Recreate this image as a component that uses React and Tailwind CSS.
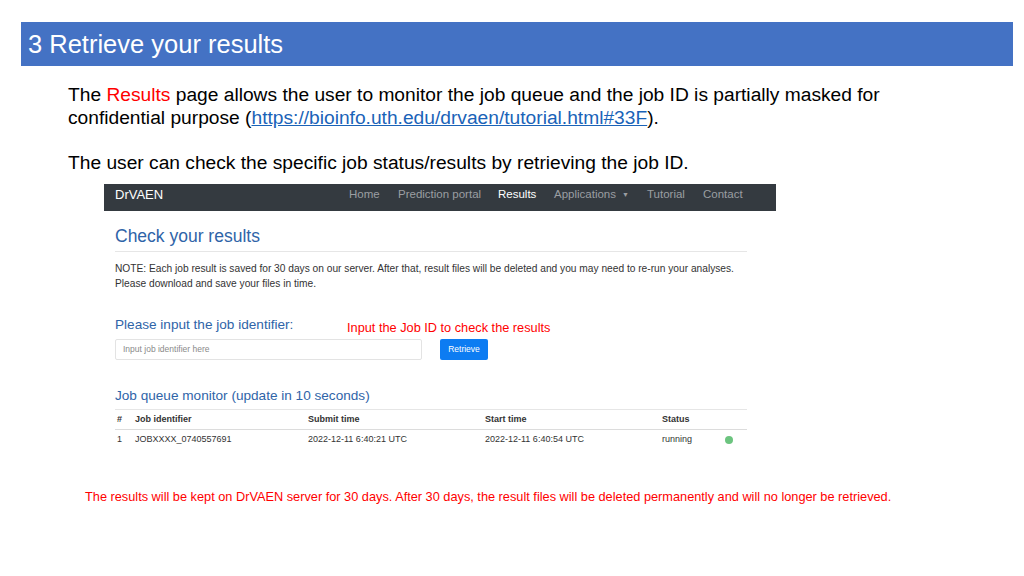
import React from "react";

const navItems = [
  { label: "Home", w: "w-[49px]" },
  { label: "Prediction portal", w: "w-[100px]" },
  { label: "Results", w: "w-[56px]", active: true },
  { label: "Applications", w: "w-[93px]", caret: true },
  { label: "Tutorial", w: "w-[56px]" },
  { label: "Contact", w: "w-[60px]" },
];

const Screenshot = () => {
  return (
    <div className="ml-[104px] mt-[10px] w-[672px] font-['Liberation_Sans',Arial,sans-serif]">
      {/* navbar */}
      <div className="h-[27px] bg-[#343a40] flex items-center pl-[11px] pb-[5px] text-[11.5px] whitespace-nowrap">
        <span className="w-[234px] text-white text-[13px]">DrVAEN</span>
        {navItems.map((item) => (
          <span
            key={item.label}
            className={`${item.w} ${item.active ? "text-white" : "text-[#9b9ea2]"} flex items-center`}
          >
            {item.label}
            {item.caret && <span className="ml-[6px] text-[7px]">▼</span>}
          </span>
        ))}
      </div>

      <div className="pl-[11px] w-[643px]">
        <h3 className="mt-[15px] text-[17.5px] leading-[20px] text-[#2f64a8]">Check your results</h3>
        <div className="mt-[5px] h-px bg-[#e6e6e6]" />
        <p className="mt-[9px] text-[10.2px] leading-[15px] text-[#333] whitespace-nowrap">
          NOTE: Each job result is saved for 30 days on our server. After that, result files will be deleted and you may need to re-run your analyses.
          <br />
          Please download and save your files in time.
        </p>

        <div className="mt-[26px] flex items-end whitespace-nowrap">
          <span className="w-[232px] text-[13.6px] leading-[16px] text-[#2f64a8]">Please input the job identifier:</span>
          <span className="text-[12.75px] leading-[14px] text-[#f00] mb-[-2px]">
            Input the Job ID to check the results
          </span>
        </div>
        <div className="mt-[6px] flex items-center">
          <div className="w-[307px] h-[21px] border border-[#e3e3e3] rounded-[2px] flex items-center pl-[7px] text-[8.5px] text-[#8a8a8a]">
            Input job identifier here
          </div>
          <div className="ml-[18px] w-[48px] h-[21px] bg-[#0d7cf2] rounded-[2px] flex items-center justify-center text-[8.5px] text-white">
            Retrieve
          </div>
        </div>

        <h4 className="mt-[27px] text-[13.6px] leading-[18px] text-[#2f64a8]">Job queue monitor (update in 10 seconds)</h4>
        <div className="mt-[4px] border-t border-[#e6e6e6] text-[9px] text-[#333]">
          <div className="grid grid-cols-[18px_173px_177px_177px_65px_22px] h-[20px] items-center font-bold border-b border-[#dcdcdc]">
            <span className="pl-[2px]">#</span>
            <span className="pl-[2px]">Job identifier</span>
            <span className="pl-[2px]">Submit time</span>
            <span className="pl-[2px]">Start time</span>
            <span className="pl-[2px]">Status</span>
            <span />
          </div>
          <div className="grid grid-cols-[18px_173px_177px_177px_65px_22px] h-[20px] items-center">
            <span className="pl-[2px]">1</span>
            <span className="pl-[2px]">JOBXXXX_0740557691</span>
            <span className="pl-[2px]">2022-12-11 6:40:21 UTC</span>
            <span className="pl-[2px]">2022-12-11 6:40:54 UTC</span>
            <span className="pl-[2px]">running</span>
            <span className="flex items-center">
              <span className="w-[8px] h-[8px] rounded-full bg-[#6cc47f]" />
            </span>
          </div>
        </div>
      </div>
    </div>
  );
};

const App = () => {
  return (
    <div className="w-[1024px] h-[576px] bg-white overflow-hidden font-['Liberation_Sans',Arial,sans-serif] pt-[22px]">
      <div className="ml-[21px] w-[992px] h-[44px] bg-[#4472c4] flex items-center pl-[7px]">
        <h1 className="text-white text-[25.5px]">3 Retrieve your results</h1>
      </div>

      <div className="pl-[68px] text-[19.2px] leading-[23px] text-black whitespace-nowrap">
        <p className="mt-[17px]">
          The <span className="text-[#f00]">Results</span> page allows the user to monitor the job queue and the job ID is partially masked for
          <br />
          confidential purpose (
          <a className="text-[#1a63b8] underline" href="#33F">https://bioinfo.uth.edu/drvaen/tutorial.html#33F</a>
          ).
        </p>
        <p className="mt-[22px]">The user can check the specific job status/results by retrieving the job ID.</p>
      </div>

      <Screenshot />

      <p className="ml-[85px] mt-[40px] text-[12.75px] leading-[14px] text-[#f00] whitespace-nowrap">
        The results will be kept on DrVAEN server for 30 days. After 30 days, the result files will be deleted permanently and will no longer be retrieved.
      </p>
    </div>
  );
};

export default App;
